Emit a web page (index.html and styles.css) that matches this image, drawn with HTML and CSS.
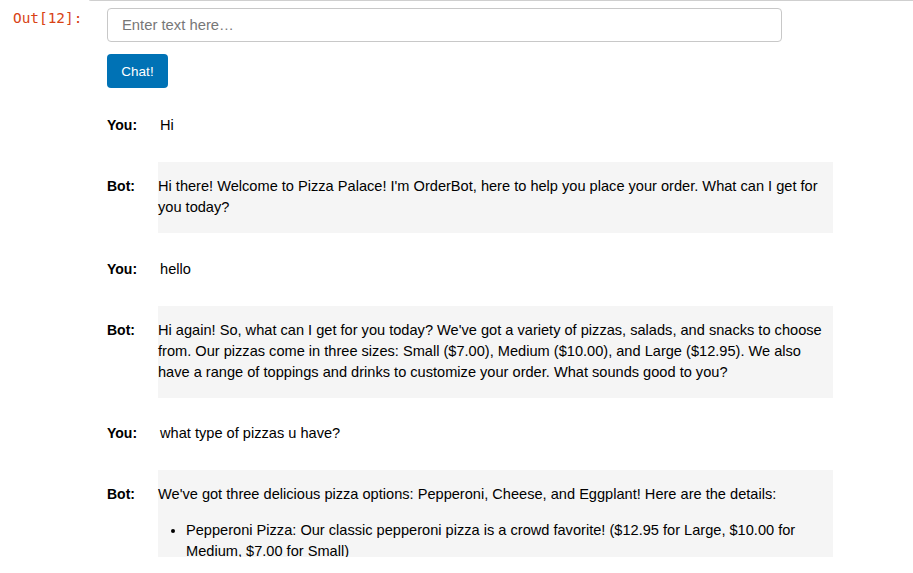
FILE: index.html
```html
<!DOCTYPE html>
<html>
<head>
<meta charset="utf-8">
<link rel="stylesheet" href="styles.css">
</head>
<body>
<div class="viewport">
  <div class="prev-cell"></div>
  <div class="output">
    <div class="prompt">Out[12]:</div>
    <div class="content">
      <input class="chat-input" type="text" placeholder="Enter text here…">
      <button class="chat-btn">Chat!</button>
      <div class="rows">
        <div class="row">
          <div class="label">You:</div>
          <div class="pane"><p>Hi</p></div>
        </div>
        <div class="row">
          <div class="label">Bot:</div>
          <div class="pane bot"><p>Hi there! Welcome to Pizza Palace! I'm OrderBot, here to help you place your order. What can I get for you today?</p></div>
        </div>
        <div class="row">
          <div class="label">You:</div>
          <div class="pane"><p>hello</p></div>
        </div>
        <div class="row">
          <div class="label">Bot:</div>
          <div class="pane bot"><p>Hi again! So, what can I get for you today? We've got a variety of pizzas, salads, and snacks to choose from. Our pizzas come in three sizes: Small ($7.00), Medium ($10.00), and Large ($12.95). We also have a range of toppings and drinks to customize your order. What sounds good to you?</p></div>
        </div>
        <div class="row">
          <div class="label">You:</div>
          <div class="pane"><p>what type of pizzas u have?</p></div>
        </div>
        <div class="row">
          <div class="label">Bot:</div>
          <div class="pane bot">
            <p>We've got three delicious pizza options: Pepperoni, Cheese, and Eggplant! Here are the details:</p>
            <ul>
              <li>Pepperoni Pizza: Our classic pepperoni pizza is a crowd favorite! ($12.95 for Large, $10.00 for Medium, $7.00 for Small)</li>
            </ul>
          </div>
        </div>
      </div>
    </div>
  </div>
</div>
</body>
</html>
```

FILE: styles.css
```css
html, body {
  margin: 0;
  padding: 0;
  background: #fff;
}

.viewport {
  height: 557px;
  overflow: hidden;
  font-family: "Liberation Sans", Arial, sans-serif;
  font-size: 14.6px;
  line-height: 21px;
  color: #000;
}

.prev-cell {
  height: 1px;
  margin-left: 89px;
  border-left: 1px solid #cfcfcf;
  border-bottom: 1px solid #cfcfcf;
  border-bottom-left-radius: 3px;
  margin-top: -1px;
}

.output {
  display: flex;
  padding-top: 7px;
}

.prompt {
  width: 94px;
  padding-left: 13px;
  flex: none;
  font-family: "DejaVu Sans Mono", "Liberation Mono", monospace;
  font-size: 14.4px;
  line-height: 20px;
  color: #d84315;
}

.content {
  display: flex;
  flex-direction: column;
  align-items: flex-start;
}

.chat-input {
  box-sizing: border-box;
  width: 675px;
  height: 34px;
  border: 1px solid #c8c8c8;
  border-radius: 4px;
  padding: 0 14px;
  font-family: "Liberation Sans", Arial, sans-serif;
  font-size: 14.8px;
  color: #000;
  background: #fff;
  outline: none;
  margin: 0;
}

.chat-input::placeholder {
  color: #777;
}

.chat-btn {
  box-sizing: border-box;
  margin-top: 12px;
  width: 61px;
  height: 34px;
  border: none;
  border-radius: 4px;
  background: #0072b5;
  color: #fff;
  font-family: "Liberation Sans", Arial, sans-serif;
  font-size: 13.5px;
  padding: 0;
}

.rows {
  display: flex;
  flex-direction: column;
  gap: 11.3px;
  margin-top: 13px;
}

.row {
  display: flex;
  align-items: flex-start;
  gap: 23px;
}

.label {
  font-weight: bold;
  font-size: 14px;
  padding-top: 14px;
  flex: none;
}

.pane {
  width: 675px;
  padding: 14px 0 15px;
  flex: none;
}

.pane.bot {
  background: #f5f5f5;
}

.pane p {
  margin: 0;
}

.pane ul {
  margin: 15px 0 0;
  padding-left: 28px;
}
```
